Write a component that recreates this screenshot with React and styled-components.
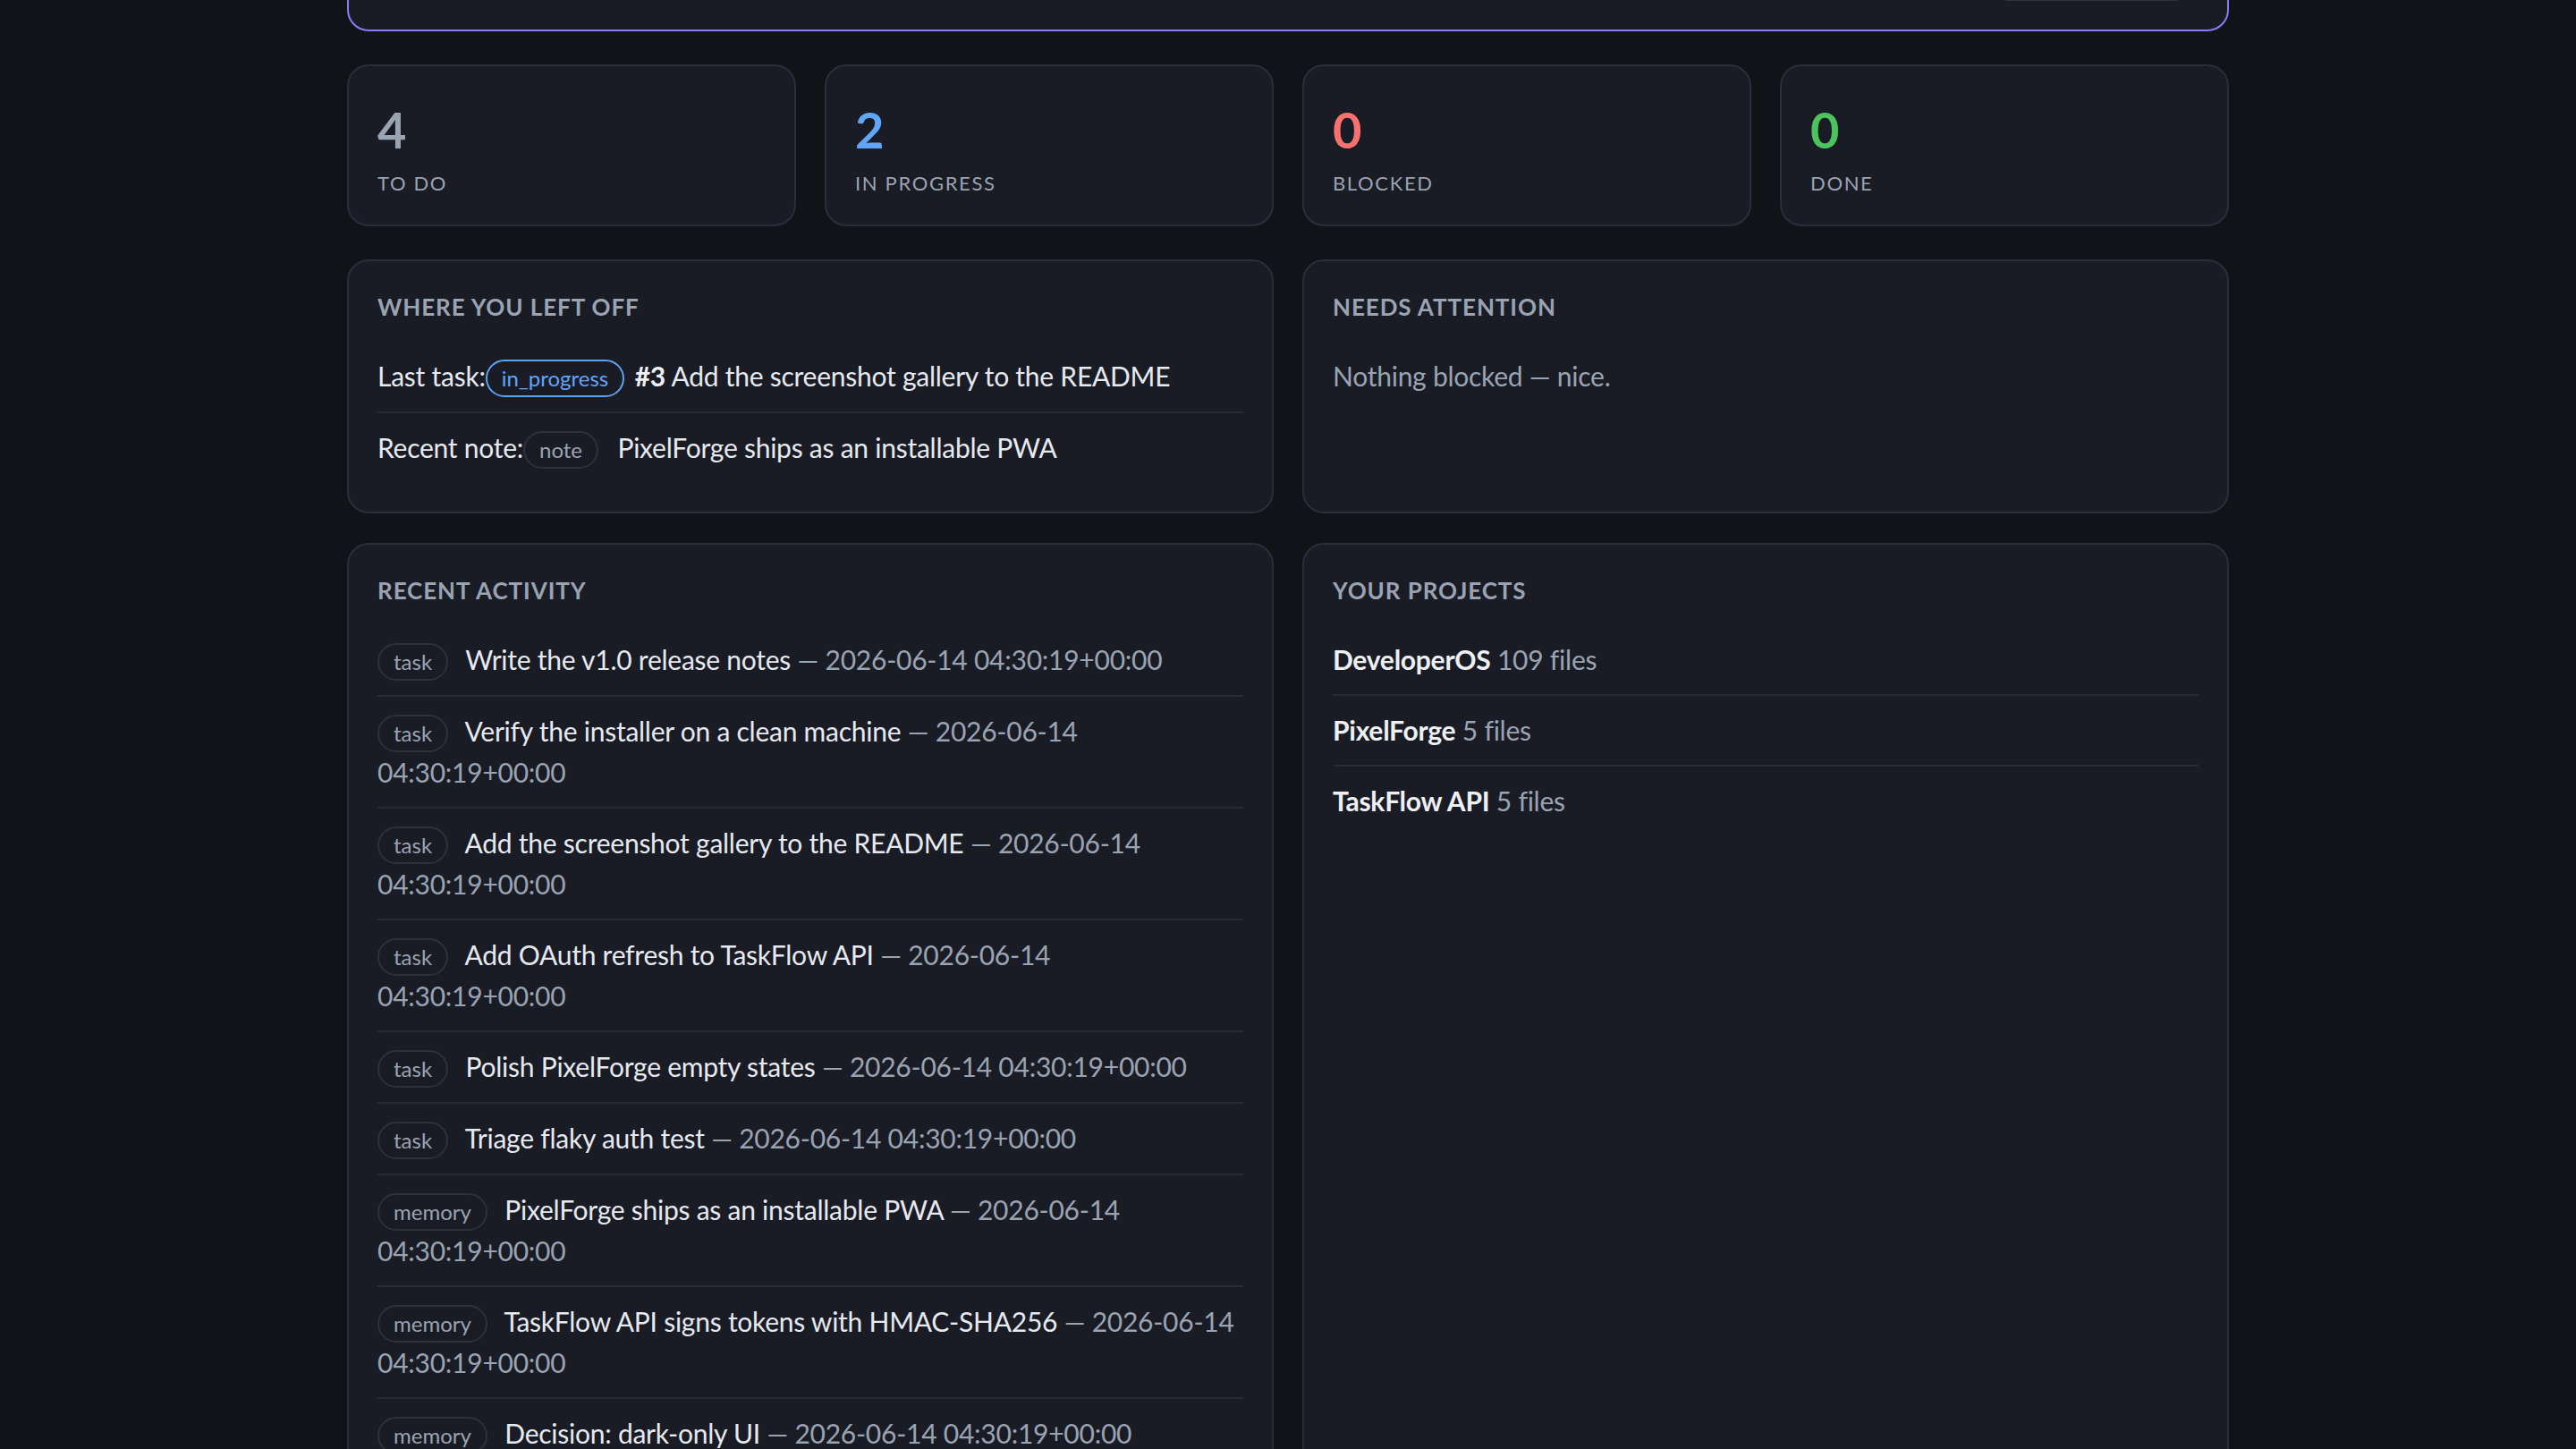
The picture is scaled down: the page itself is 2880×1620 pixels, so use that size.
import React from 'react'
import styled, { createGlobalStyle } from 'styled-components'

const GlobalStyle = createGlobalStyle`
  * {
    box-sizing: border-box;
  }

  html,
  body {
    margin: 0;
    padding: 0;
    background: #111318;
    overflow: hidden;
  }

  body {
    font-family: 'Segoe UI', Lato, 'Open Sans', sans-serif;
    font-size: 30px;
    line-height: 1.5;
    letter-spacing: -0.25px;
    color: #e6e9ef;
  }
`

const Page = styled.div`
  min-height: 100vh;
  background: #111318;
`

// the page is scrolled a little, so the capture panel sits mostly above the fold
const Container = styled.main`
  max-width: 2200px;
  margin: -225px auto 0;
  padding: 0 48px 64px;
`

const CapturePanel = styled.section`
  height: 260px;
  display: flex;
  flex-direction: column;
  justify-content: flex-end;
  gap: 24px;
  padding: 32px;
  background: #1a1c25;
  border: 2px solid #8b7cf6;
  border-radius: 24px;
`

const CaptureInput = styled.div`
  height: 88px;
  padding: 20px 24px;
  border: 2px solid #2a2e3a;
  border-radius: 16px;
  background: #14161d;
  color: #6b7382;
  font-size: 28px;
`

const CaptureActions = styled.div`
  display: flex;
  justify-content: flex-end;
  padding-right: 13px;
`

const CaptureButton = styled.button`
  width: 213px;
  height: 64px;
  border: 2px solid #2f3340;
  border-radius: 14px;
  background: #22252f;
  color: #e6e9ef;
  font: inherit;
  font-size: 28px;
`

const StatsGrid = styled.div`
  display: grid;
  grid-template-columns: repeat(4, 1fr);
  gap: 32px;
  margin-top: 37px;
`

const StatCard = styled.div`
  padding: 32px;
  background: #1a1c25;
  border: 2px solid #2a2e3a;
  border-radius: 24px;
`

const StatValue = styled.div`
  font-size: 56px;
  font-weight: 700;
  line-height: 1.4;
  color: ${props => props.color || '#9aa3b2'};
`

const StatLabel = styled.div`
  margin-top: 8px;
  font-size: 22px;
  line-height: 1.2;
  letter-spacing: 0.075em;
  text-transform: uppercase;
  color: #9aa3b2;
`

const TwoCol = styled.div`
  display: grid;
  grid-template-columns: 1fr 1fr;
  gap: 32px;
  margin-top: ${props => props.top || 32}px;
`

const Card = styled.section`
  padding: 32px;
  background: #1a1c25;
  border: 2px solid #2a2e3a;
  border-radius: 24px;
`

const CardTitle = styled.h2`
  margin: 0 0 19px;
  font-size: 26px;
  font-weight: 700;
  line-height: 1.5;
  letter-spacing: 0.035em;
  text-transform: uppercase;
  color: #9aa3b2;
`

const List = styled.div`
  display: flex;
  flex-direction: column;
`

const Row = styled.div`
  padding: 16px 0;
  border-bottom: 2px solid #262a35;

  &:last-child {
    border-bottom: none;
  }
`

const Muted = styled.span`
  color: #9aa3b2;
`

const NoWrap = styled.span`
  white-space: nowrap;
`

const Strong = styled.strong`
  font-weight: 700;
  color: #eef0f4;
`

const Tag = styled.span`
  display: inline-block;
  margin-right: ${props => props.gap ?? 12}px;
  padding: 5px 16px;
  border: 2px solid #2c313d;
  border-radius: 999px;
  font-size: 24px;
  line-height: 28px;
  letter-spacing: 0;
  color: #9aa3b2;
`

const StatusBadge = styled(Tag)`
  border-color: #5ea2f2;
  color: #60a5fa;
`

const EmptyNote = styled.p`
  margin: 0;
  padding: 16px 0;
  color: #9aa3b2;
`

const stats = [
  { label: 'To do', value: 4, color: '#9aa3b2' },
  { label: 'In progress', value: 2, color: '#60a5fa' },
  { label: 'Blocked', value: 0, color: '#f87171' },
  { label: 'Done', value: 0, color: '#4bc45e' },
]

const date = '2026-06-14'
const time = '04:30:19+00:00'

const activity = [
  { kind: 'task', text: 'Write the v1.0 release notes' },
  { kind: 'task', text: 'Verify the installer on a clean machine' },
  { kind: 'task', text: 'Add the screenshot gallery to the README' },
  { kind: 'task', text: 'Add OAuth refresh to TaskFlow API' },
  { kind: 'task', text: 'Polish PixelForge empty states' },
  { kind: 'task', text: 'Triage flaky auth test' },
  { kind: 'memory', text: 'PixelForge ships as an installable PWA' },
  { kind: 'memory', text: 'TaskFlow API signs tokens with HMAC-SHA256' },
  { kind: 'memory', text: 'Decision: dark-only UI' },
  { kind: 'memory', text: 'Release checklist lives in docs/release.md' },
]

const projects = [
  { name: 'DeveloperOS', files: 109 },
  { name: 'PixelForge', files: 5 },
  { name: 'TaskFlow API', files: 5 },
]

export default function App() {
  return (
    <Page>
      <GlobalStyle />
      <Container>
        <CapturePanel>
          <CaptureInput>Capture a task, note or decision…</CaptureInput>
          <CaptureActions>
            <CaptureButton>Save</CaptureButton>
          </CaptureActions>
        </CapturePanel>

        <StatsGrid>
          {stats.map(s => (
            <StatCard key={s.label}>
              <StatValue color={s.color}>{s.value}</StatValue>
              <StatLabel>{s.label}</StatLabel>
            </StatCard>
          ))}
        </StatsGrid>

        <TwoCol top={37}>
          <Card>
            <CardTitle>Where you left off</CardTitle>
            <List>
              <Row>
                Last task:<StatusBadge gap={4}>in_progress</StatusBadge>{' '}
                <Strong>#3</Strong> Add the screenshot gallery to the README
              </Row>
              <Row>
                Recent note:<Tag gap={14}>note</Tag> PixelForge ships as an installable PWA
              </Row>
            </List>
          </Card>
          <Card>
            <CardTitle>Needs attention</CardTitle>
            <EmptyNote>Nothing blocked — nice.</EmptyNote>
          </Card>
        </TwoCol>

        <TwoCol top={33}>
          <Card>
            <CardTitle>Recent activity</CardTitle>
            <List>
              {activity.map(item => (
                <Row key={item.text}>
                  <Tag>{item.kind}</Tag> {item.text}{' '}
                  <Muted>
                    — <NoWrap>{date}</NoWrap> <NoWrap>{time}</NoWrap>
                  </Muted>
                </Row>
              ))}
            </List>
          </Card>
          <Card>
            <CardTitle>Your projects</CardTitle>
            <List>
              {projects.map(p => (
                <Row key={p.name}>
                  <Strong>{p.name}</Strong> <Muted>{p.files} files</Muted>
                </Row>
              ))}
            </List>
          </Card>
        </TwoCol>
      </Container>
    </Page>
  )
}
